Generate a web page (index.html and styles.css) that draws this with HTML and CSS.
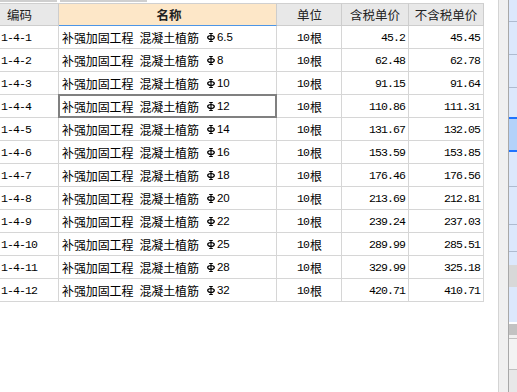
FILE: index.html
```html
<!DOCTYPE html>
<html lang="zh">
<head>
<meta charset="utf-8">
<link rel="stylesheet" href="styles.css">
</head>
<body>
<div class="app">
  <div class="main">
    <div class="tabs"><span class="tab t1"></span><span class="tab t2"></span></div>
    <div class="grid">
      <div class="row head">
        <div class="c c1 h">编码</div>
        <div class="c c2 h hn">名称</div>
        <div class="c c3 h">单位</div>
        <div class="c c4 h">含税单价</div>
        <div class="c c5 h">不含税单价</div>
      </div>
    </div>
    <div class="grid" id="body"></div>
  </div>
  <div class="scroll"></div>
  <div class="panel">
    <div class="p b1"></div><div class="p b2"></div><div class="p b3"></div><div class="p b4"></div>
    <div class="p sel"></div><div class="p b6"></div><div class="p b7"></div><div class="p b8"></div>
    <div class="p b9"></div><div class="p gray"></div><div class="p b10"></div><div class="p white"></div>
    <div class="p g2"></div><div class="p g3"></div><div class="p g4"></div><div class="p g5"></div>
  </div>
</div>
<script src="app.js"></script>
</body>
</html>
```

FILE: app.js
```js
const rows = [
  ["1-4-1","6.5","45.2","45.45"],
  ["1-4-2","8","62.48","62.78"],
  ["1-4-3","10","91.15","91.64"],
  ["1-4-4","12","110.86","111.31"],
  ["1-4-5","14","131.67","132.05"],
  ["1-4-6","16","153.59","153.85"],
  ["1-4-7","18","176.46","176.56"],
  ["1-4-8","20","213.69","212.81"],
  ["1-4-9","22","239.24","237.03"],
  ["1-4-10","25","289.99","285.51"],
  ["1-4-11","28","329.99","325.18"],
  ["1-4-12","32","420.71","410.71"]
];
const sym = '<svg class="phi" width="8" height="9" viewBox="0 0 8 9"><path d="M4 0.5V8.5M2.2 0.5H5.8M2.2 8.5H5.8" stroke="#000" stroke-width="1.1" fill="none"/><ellipse cx="4" cy="4.5" rx="3.3" ry="1.9" stroke="#000" stroke-width="1.3" fill="none"/></svg>';
const body = document.getElementById('body');
body.innerHTML = rows.map((r, i) =>
  '<div class="row">' +
  '<div class="c c1 mono">' + r[0] + '</div>' +
  '<div class="c c2' + (i === 3 ? ' active' : '') + '"><span class="cn">补强加固工程</span><span class="cn w2">混凝土植筋</span>' + sym + '<span class="dia">' + r[1] + '</span></div>' +
  '<div class="c c3"><span class="mono u">10</span><span class="cn">根</span></div>' +
  '<div class="c c4 num mono">' + r[2] + '</div>' +
  '<div class="c c5 num mono">' + r[3] + '</div>' +
  '</div>'
).join('');
```

FILE: styles.css
```css
html, body { margin: 0; padding: 0; background: #fff; }
body { width: 517px; height: 392px; overflow: hidden; font-family: "Noto Sans CJK SC", sans-serif; font-size: 12px; color: #000; }
.app { display: flex; height: 392px; }
.main { width: 498px; flex: none; background: #fff; }
.tabs { height: 3px; display: flex; gap: 3px; }
.tab { display: block; height: 2px; background: #cfcfcf; }
.t1 { width: 57px; }
.t2 { width: 87px; }
.grid { display: flex; flex-direction: column; }
.row { display: grid; grid-template-columns: 59px 218px 65px 67px 75px; height: 23px; }
.c { box-sizing: border-box; border-right: 1px solid #d6d6d6; border-bottom: 1px solid #d6d6d6; display: flex; align-items: center; white-space: nowrap; position: relative; }
.head .c { background: #e8e8e8; border-top: 1px solid #d0d0d0; border-right-color: #cdcdcd; border-bottom-color: #cdcdcd; justify-content: center; color: #222; font-size: 12.5px; }
.head .c1 { padding-right: 20px; }
.head .hn { background: #fde7c8; border-bottom: 1px solid #4d96e6; font-weight: bold; color: #222; }
.c1 { padding-left: 1px; }
.c2 { padding-left: 3px; }
.c3 { justify-content: center; padding-left: 1px; }
.num { justify-content: flex-end; padding-right: 3px; }
.mono { font-family: "Liberation Mono", monospace; font-size: 11.5px; letter-spacing: -0.9px; }
.u { margin-right: 1px; }
.cn { font-family: "Noto Sans CJK SC", sans-serif; font-size: 12px; letter-spacing: -0.1px; }
.w2 { margin-left: 6px; }
.phi { margin-left: 8px; margin-right: 2px; }
.dia { font-family: "Liberation Sans", sans-serif; font-size: 11.5px; }
.active::after { content: ""; position: absolute; top: -1px; left: -1px; right: -1px; bottom: -1px; border: 2px solid #808080; }
.scroll { width: 9px; flex: none; background: #f0f0f0; border-left: 1px solid #d4d4d4; border-right: 1px solid #a8a8a8; }
.panel { width: 8px; flex: none; display: flex; flex-direction: column; background: #dce8fc; }
.p { flex: none; box-sizing: border-box; border-bottom: 1px solid #aebbd0; background: #dce8fc; }
.b1 { height: 22px; }
.b2 { height: 33px; }
.b3 { height: 33px; }
.b4 { height: 31px; border-bottom: 2px solid #1f74ff; }
.sel { height: 33px; background: #b4d2fa; border-bottom: 2px solid #1f74ff; }
.b6 { height: 35px; }
.b7 { height: 38px; }
.b8 { height: 27px; }
.b9 { height: 13px; border-bottom: none; }
.gray { height: 22px; background: #d8d8d8; border-bottom: none; }
.b10 { height: 35px; border-bottom: none; }
.white { height: 2px; background: #fff; border-bottom: none; }
.g2 { height: 11px; background: #c2c2c2; border-bottom: none; }
.g3 { height: 4px; background: #f0f0f0; border-bottom: 1px solid #c0c0c0; }
.g4 { height: 31px; background: #f3f3f3; border-bottom: 1px solid #c0c0c0; }
.g5 { height: 22px; background: #e8e8e8; border-bottom: none; }
```
